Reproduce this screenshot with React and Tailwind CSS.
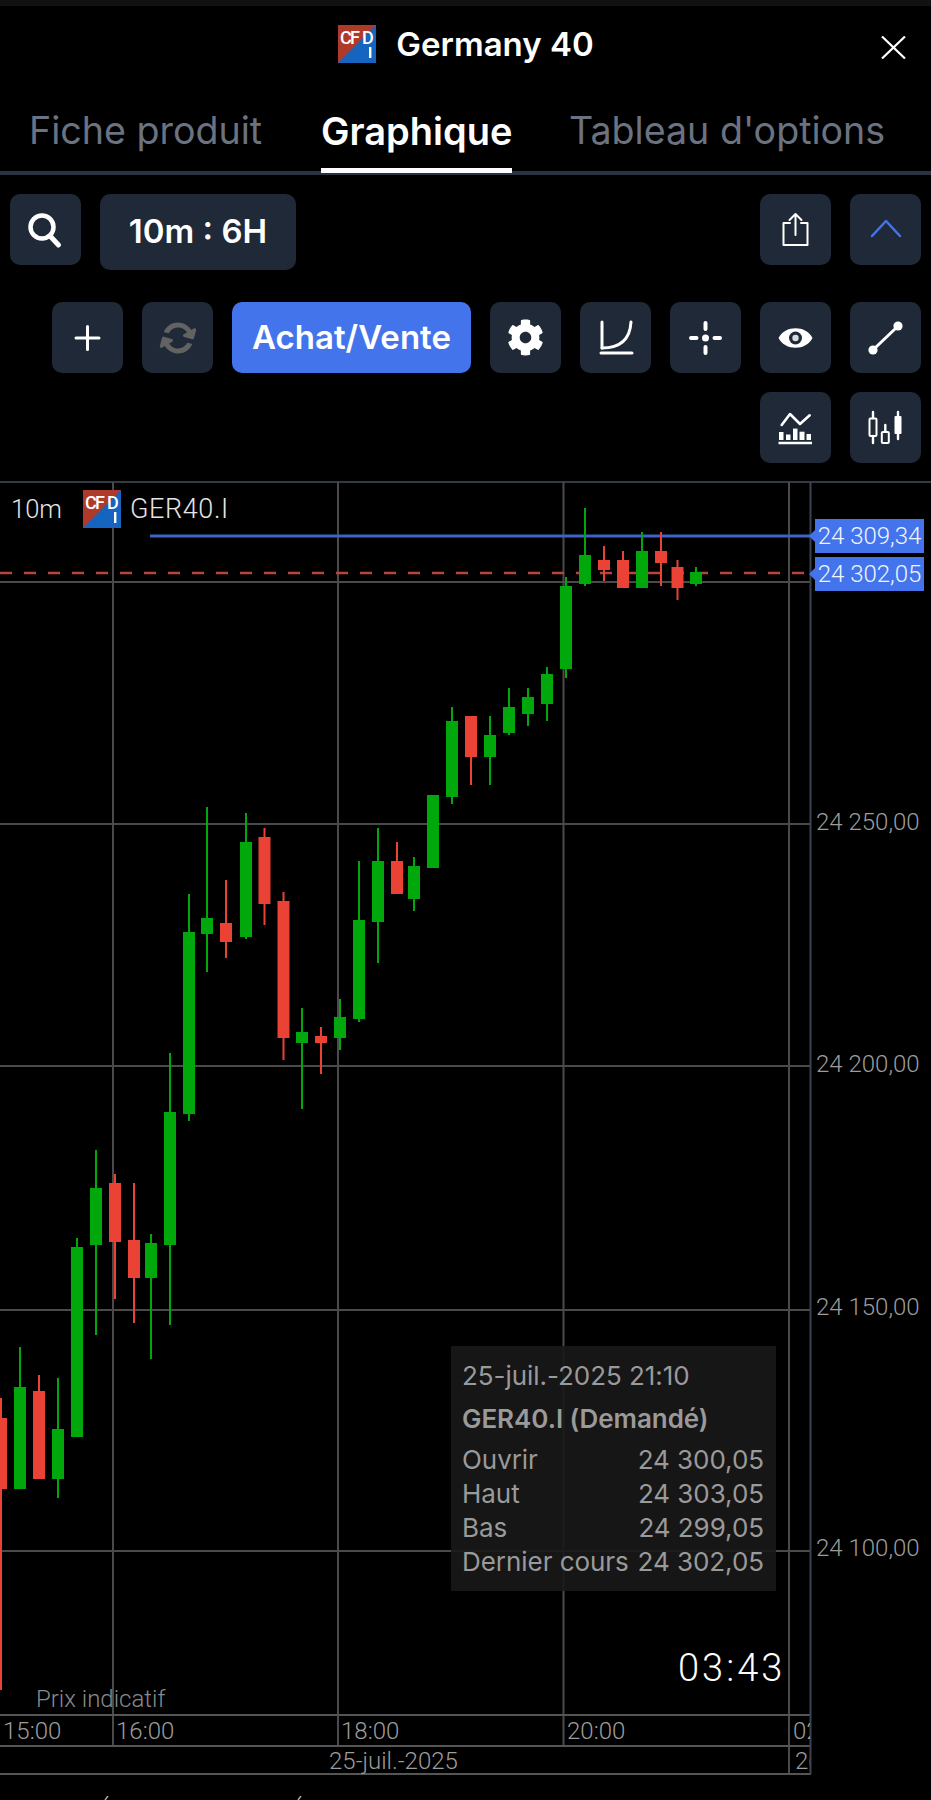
import React from "react";
import { FaCog, FaSyncAlt } from "react-icons/fa";

const G = "#00a80b";
const R = "#ea4335";
// [centerX, high, bodyTop, bodyBottom, low, color]
const candles = [
  [1, 1398, 1418, 1489, 1690, R],
  [20, 1347, 1387, 1489, 1489, G],
  [39, 1375, 1391, 1479, 1479, R],
  [58, 1378, 1429, 1479, 1498, G],
  [77, 1238, 1247, 1437, 1437, G],
  [96, 1150, 1188, 1245, 1335, G],
  [115, 1174, 1183, 1242, 1299, R],
  [134, 1183, 1240, 1278, 1323, R],
  [151, 1234, 1243, 1278, 1359, G],
  [170, 1053, 1112, 1245, 1325, G],
  [189, 894, 932, 1114, 1121, G],
  [207, 807, 918, 934, 972, G],
  [226, 880, 923, 942, 958, R],
  [246, 813, 842, 937, 939, G],
  [264.5, 828, 837, 904, 925, R],
  [283.5, 892, 901, 1038, 1060, R],
  [302, 1008, 1032, 1043, 1109, G],
  [321, 1027, 1036, 1043, 1074, R],
  [340, 999, 1017, 1038, 1050, G],
  [359, 861, 920, 1019, 1022, G],
  [378, 828, 861, 922, 963, G],
  [397, 842, 861, 894, 894, R],
  [414, 857, 866, 899, 911, G],
  [433, 795, 795, 868, 868, G],
  [452, 707, 721, 797, 804, G],
  [471, 716, 716, 757, 785, R],
  [490, 716, 735, 757, 785, G],
  [509, 688, 707, 733, 735, G],
  [528, 688, 697, 714, 726, G],
  [547, 667, 674, 704, 721, G],
  [566, 577, 586, 669, 678, G],
  [585, 508, 555, 584, 586, G],
  [604, 546, 560, 570, 581, R],
  [623, 551, 560, 588, 588, R],
  [642, 532, 551, 588, 588, G],
  [661, 532, 551, 563, 586, R],
  [677.5, 560, 567, 588, 600, R],
  [696, 567, 572, 584, 586, G],
];

function Logo({ className }) {
  return (
    <svg viewBox="0 0 38 38" className={className}>
      <rect width="38" height="38" fill="#b03a2a" />
      <path d="M38 0V38H0Z" fill="#1464c0" />
      <text x="2" y="18.5" fontSize="18" fontWeight="500" fill="#fff" fontFamily="Roboto, sans-serif" textLength="20" lengthAdjust="spacing">CF</text>
      <text x="24" y="18.5" fontSize="18" fontWeight="500" fill="#fff" fontFamily="Roboto, sans-serif">D</text>
      <rect x="31" y="22" width="2.4" height="11" fill="#fff" />
    </svg>
  );
}

function Btn({ children, className = "" }) {
  return (
    <div className={`w-[71px] h-[71px] shrink-0 rounded-[10px] bg-[#1f2937] flex items-center justify-center ${className}`}>
      {children}
    </div>
  );
}

function I({ children }) {
  return <svg viewBox="0 0 71 71" className="w-[71px] h-[71px]" fill="none" stroke="#fff" strokeLinecap="round" strokeLinejoin="round">{children}</svg>;
}

const axis = "absolute font-['Roboto',sans-serif] font-light text-[24px] leading-[28px] text-[#9c9c9c] whitespace-nowrap";

function PriceTag({ top, text }) {
  return (
    <div className="absolute left-[809px] flex items-center" style={{ top }}>
      <svg width="6" height="12" viewBox="0 0 6 12" className="shrink-0"><path d="M6 0V12L0 6Z" fill="#4474eb" /></svg>
      <div className="h-[34px] w-[109px] bg-[#4474eb] text-[#f0f4ff] font-['Roboto',sans-serif] font-light text-[24px] leading-[34px] text-center whitespace-nowrap">{text}</div>
    </div>
  );
}

function Row({ label, value }) {
  return (
    <div className="flex justify-between h-[34px] leading-[34px]">
      <span>{label}</span>
      <span>{value}</span>
    </div>
  );
}

export default function App() {
  return (
    <div className="w-[931px] h-[1800px] bg-black overflow-hidden text-white font-['Inter',sans-serif]">
      <div className="h-[6px] bg-[#111111]" />

      {/* Header */}
      <div className="relative h-[78px] flex items-center justify-center">
        <div className="flex items-center gap-[20px] pl-[1px] -mt-[2px]">
          <Logo className="w-[38px] h-[38px]" />
          <span className="text-[33px] leading-[40px] font-semibold">Germany 40</span>
        </div>
        <svg viewBox="0 0 25 23" className="absolute left-[881px] top-[30px] w-[25px] h-[23px]" stroke="#fff" strokeWidth="2.2" fill="none">
          <path d="M1 0.5 24 22.5M24 0.5 1 22.5" />
        </svg>
      </div>

      {/* Tabs */}
      <div className="relative h-[91px] border-b-[4px] border-[#2a3342]">
        <div className="flex h-full items-start pt-[24px] text-[38px] leading-[46px]">
          <span className="ml-[29px] w-[292px] text-[37.6px] text-[#6b7280]">Fiche produit</span>
          <span className="relative w-[248px] font-semibold text-white">
            Graphique
          </span>
          <span className="text-[37.6px] text-[#6b7280]">Tableau d'options</span>
        </div>
        <div className="absolute left-[321px] top-[84px] w-[191px] h-[5px] bg-white" />
      </div>

      {/* Toolbar */}
      <div className="px-[10px] pt-[19px] flex justify-between items-start h-[127px]">
        <div className="flex items-start gap-[19px]">
          <Btn>
            <I>
              <circle cx="32" cy="33" r="11.5" strokeWidth="4.5" />
              <path d="M41 43 48.5 51" strokeWidth="5" />
            </I>
          </Btn>
          <div className="w-[196px] h-[76px] rounded-[10px] bg-[#1f2937] flex items-center justify-center text-[33px] font-semibold">10m : 6H</div>
        </div>
        <div className="flex gap-[19px]">
          <Btn>
            <I>
              <path d="M30 29H23.5V51H47.5V29H41" strokeWidth="2" />
              <path d="M35.5 41V20M29.5 26 35.5 20 41.5 26" strokeWidth="2" />
            </I>
          </Btn>
          <Btn>
            <I>
              <path d="M22 42 36 27 50 42" stroke="#4474eb" strokeWidth="2.5" />
            </I>
          </Btn>
        </div>
      </div>

      <div className="pr-[10px] flex justify-end gap-[19px] h-[90px]">
        <Btn>
          <I><path d="M35.5 24.5V47.5M24 36H47" strokeWidth="3" /></I>
        </Btn>
        <Btn>
          <FaSyncAlt className="w-[32px] h-[32px] text-[#626262] rotate-[15deg]" />
        </Btn>
        <div className="w-[239px] h-[71px] rounded-[10px] bg-[#4474eb] flex items-center justify-center text-[33px] font-semibold">Achat/Vente</div>
        <Btn>
          <FaCog className="w-[37px] h-[37px] text-white" />
        </Btn>
        <Btn>
          <I>
            <path d="M22 20V46" strokeWidth="3" />
            <path d="M22 46C40 46 50 38 51 20" strokeWidth="3" />
            <path d="M21 51H52" strokeWidth="3" />
          </I>
        </Btn>
        <Btn>
          <I>
            <circle cx="35.5" cy="36" r="3.5" fill="#fff" stroke="none" />
            <path d="M35.5 21V27M35.5 45V51M21 36H26.5M44.5 36H50" strokeWidth="4" />
          </I>
        </Btn>
        <Btn>
          <I>
            <path d="M18.5 36C25 23 46 23 52.5 36C46 49 25 49 18.5 36Z" fill="#fff" stroke="none" />
            <circle cx="35.5" cy="36" r="6.5" fill="#1f2937" stroke="none" />
            <circle cx="35.5" cy="36" r="3.2" fill="#d8dbe0" stroke="none" />
          </I>
        </Btn>
        <Btn>
          <I>
            <circle cx="23" cy="48" r="4.6" fill="#fff" stroke="none" />
            <circle cx="48" cy="24" r="4.6" fill="#fff" stroke="none" />
            <path d="M25 46 46 26" strokeWidth="3" />
          </I>
        </Btn>
      </div>

      <div className="pr-[10px] flex justify-end gap-[19px] h-[89px]">
        <Btn>
          <I>
            <path d="M21.7 33 30 22 40 32 49.7 23.3" strokeWidth="2.6" />
            <path d="M18.5 51H52" strokeWidth="2.6" strokeLinecap="butt" />
            <g fill="#fff" stroke="none">
              <rect x="19" y="40" width="4.5" height="8" />
              <rect x="26" y="42.5" width="4.5" height="5.5" />
              <rect x="33" y="36.6" width="4.5" height="11.4" />
              <rect x="39.5" y="39.7" width="5" height="8.3" />
              <rect x="46.5" y="42" width="4.5" height="6" />
            </g>
          </I>
        </Btn>
        <Btn>
          <I>
            <path d="M23 20V26M23 44V51" strokeWidth="2.4" />
            <rect x="19.5" y="26.5" width="7" height="17.5" rx="1" strokeWidth="2" />
            <path d="M35.3 33V39.5" strokeWidth="2.4" />
            <rect x="31.8" y="40" width="7" height="11" rx="1" strokeWidth="2" />
            <path d="M48 20V47" strokeWidth="2.4" />
            <rect x="44.5" y="24" width="7" height="18" rx="1" fill="#fff" stroke="none" />
          </I>
        </Btn>
      </div>

      {/* Chart */}
      <div className="relative h-[1319px] overflow-hidden">
        <svg viewBox="0 481 931 1319" className="absolute inset-0 w-[931px] h-[1319px]">
          <path d="M0 482H931" stroke="#333a44" strokeWidth="2" />
          <g stroke="#4a4a4a" strokeWidth="2" fill="none">
            <path d="M0 582H810M0 824H810M0 1066H810M0 1310H810M0 1551H810" />
            <path d="M113 482V1746M338 482V1746M563.5 482V1746M789 482V1774" />
            <path d="M0 1715H810M0 1746H810M0 1774H811" stroke="#555555" />
          </g>
          <path d="M810.5 482V1774" stroke="#3a4352" strokeWidth="2" />
          <path d="M0 573H810" stroke="#b8443a" strokeWidth="2.5" strokeDasharray="12 12" />
          <path d="M150 536H810" stroke="#3f62c4" strokeWidth="3" />
          {candles.map(([x, h, t, b, l, c]) => (
            <g key={x}>
              <path d={`M${x} ${h}V${l}`} stroke={c} strokeWidth="2" />
              <rect x={x - 6} y={t} width="12" height={b - t} fill={c} />
            </g>
          ))}
        </svg>

        <span className="absolute left-[11px] top-[13px] font-['Roboto',sans-serif] font-light text-[25.5px] leading-[30px] text-[#e5e5e5]">10m</span>
        <Logo className="absolute left-[83px] top-[9px] w-[38px] h-[38px]" />
        <span className="absolute left-[130px] top-[13px] font-['Roboto',sans-serif] font-light text-[27px] leading-[30px] tracking-[0.6px] text-[#e5e5e5]">GER40.I</span>

        <PriceTag top={38} text="24 309,34" />
        <PriceTag top={76} text="24 302,05" />

        <span className={`${axis} left-[816px] top-[327px]`}>24 250,00</span>
        <span className={`${axis} left-[816px] top-[569px]`}>24 200,00</span>
        <span className={`${axis} left-[816px] top-[812px]`}>24 150,00</span>
        <span className={`${axis} left-[816px] top-[1053px]`}>24 100,00</span>

        <span className={`${axis} left-[36px] top-[1204px] !text-[#8a8a8a]`}>Prix indicatif</span>
        <span className={`${axis} left-[3px] top-[1236px]`}>15:00</span>
        <span className={`${axis} left-[116px] top-[1236px]`}>16:00</span>
        <span className={`${axis} left-[341px] top-[1236px]`}>18:00</span>
        <span className={`${axis} left-[567px] top-[1236px]`}>20:00</span>
        <span className={`${axis} left-[793px] top-[1236px] w-[17px] overflow-hidden`}>02:00</span>
        <span className={`${axis} left-[329px] top-[1266px]`}>25-juil.-2025</span>
        <span className={`${axis} left-[795px] top-[1266px] w-[15px] overflow-hidden`}>26-juil.-2025</span>

        <span className="absolute left-[678px] top-[1165px] font-['Roboto',sans-serif] font-light text-[38px] leading-[44px] tracking-[3px] text-white">03:43</span>

        <div className="absolute left-[451px] top-[865px] w-[325px] h-[245px] bg-[#181818]/90 pl-[11px] pr-[12px] pt-[12px] font-['Inter',sans-serif] text-[26px] tracking-[-0.05px] text-[#9a9a9a]">
          <div className="h-[36px] leading-[36px]">25-juil.-2025 21:10</div>
          <div className="h-[49px] leading-[49px] font-semibold">GER40.I (Demandé)</div>
          <Row label="Ouvrir" value="24 300,05" />
          <Row label="Haut" value="24 303,05" />
          <Row label="Bas" value="24 299,05" />
          <Row label="Dernier cours" value="24 302,05" />
        </div>

        <svg viewBox="0 0 8 4" className="absolute left-[104px] top-[1315px] w-[8px] h-[4px]"><path d="M1 4 4 0" stroke="#aaaaaa" strokeWidth="1.5" /></svg>
        <svg viewBox="0 0 8 4" className="absolute left-[297px] top-[1315px] w-[8px] h-[4px]"><path d="M1 4 4 0" stroke="#aaaaaa" strokeWidth="1.5" /></svg>
      </div>
    </div>
  );
}
